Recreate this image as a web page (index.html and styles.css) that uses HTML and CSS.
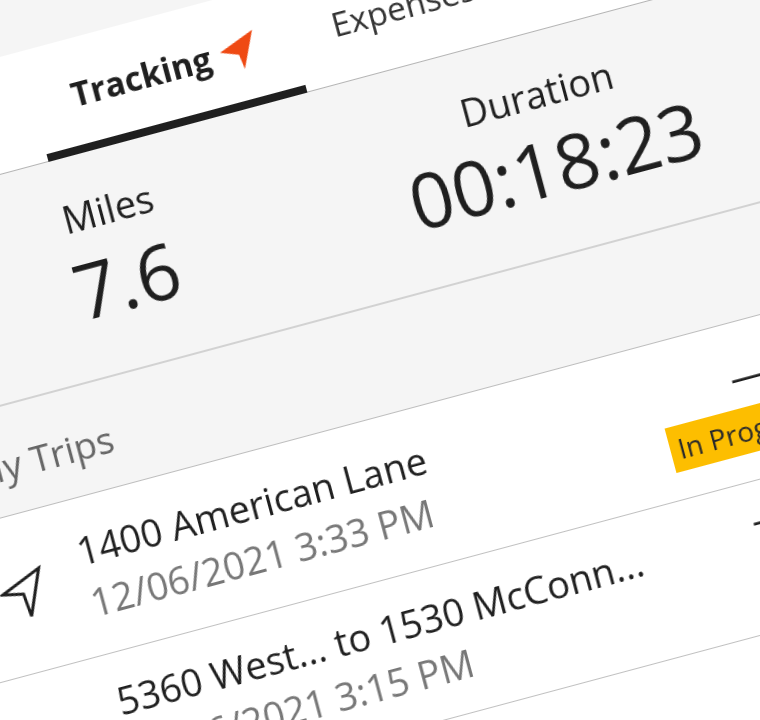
FILE: index.html
```html
<!DOCTYPE html>
<html lang="en">
<head>
<meta charset="utf-8">
<title>Tracking</title>
<link rel="stylesheet" href="styles.css">
</head>
<body>
<div class="viewport">
  <main class="screen">
    <div class="top-gap"></div>
    <nav class="tabs">
      <div class="tab tab-active">
        <span>Tracking</span>
        <svg class="tab-icon" viewBox="0 0 40 40"><polygon points="38.7,2 1.8,15.9 19.7,22.7 21.8,37.9"/></svg>
      </div>
      <div class="tab tab-plain">Expenses</div>
    </nav>
    <section class="stats">
      <div class="stat"><div class="stat-label">Miles</div><div class="stat-value">7.6</div></div>
      <div class="stat"><div class="stat-label">Duration</div><div class="stat-value">00:18:23</div></div>
    </section>
    <h2 class="trips-head">My Trips</h2>
    <div class="trip trip-first">
      <svg class="trip-icon" viewBox="0 0 50 50"><polygon points="44.3,3.7 2.5,20.5 23,25 25.1,48.3"/></svg>
      <div class="trip-text">
        <div class="trip-name">1400 American Lane</div>
        <div class="trip-date">12/06/2021 3:33 PM</div>
      </div>
      <div class="trip-side">
        <div class="trip-dash trip-dash-first">—</div>
        <div class="badge">In Progress</div>
      </div>
    </div>
    <div class="trip trip-second">
      <svg class="trip-icon trip-icon-low" viewBox="0 0 50 50"><polygon points="44.3,3.7 2.5,20.5 23,25 25.1,48.3"/></svg>
      <div class="trip-text">
        <div class="trip-name">5360 West... to 1530 McConn...</div>
        <div class="trip-date">12/06/2021 3:15 PM</div>
      </div>
      <div class="trip-side trip-side-second">
        <div class="trip-dash">—</div>
      </div>
    </div>
  </main>
</div>
</body>
</html>
```
FILE: styles.css
```css
* { box-sizing: border-box; }
html, body { margin: 0; padding: 0; background: #f5f5f5; }
.viewport { width: 760px; height: 720px; overflow: hidden; }
.screen {
  width: 1000px;
  height: 920px;
  margin-left: -200px;
  transform-origin: 200px 0;
  transform: rotate(-15deg);
  background: #fff;
  color: #1f1f1f;
  font-family: "Open Sans", "Liberation Sans", sans-serif;
  filter: blur(0.6px);
}
.top-gap { height: 55px; background: #f5f5f5; }
.tabs {
  display: flex;
  height: 114px;
  padding-left: 205px;
  background: #fff;
  border-bottom: 1px solid #b4b4b4;
}
.tab { height: 114px; padding-top: 33px; font-size: 33.5px; line-height: 45px; }
.tab-active {
  display: flex;
  justify-content: center;
  align-items: flex-start;
  gap: 8px;
  width: 268px;
  border-bottom: 8px solid #1f1f1f;
  font-weight: 700;
}
.tab-plain { padding-left: 41px; color: #333; }
.tab-icon { width: 40px; height: 40px; margin-top: 4px; margin-right: -3px; fill: #ef4a14; }
.stats {
  display: grid;
  grid-template-columns: 444px 444px;
  height: 224px;
  padding: 34px 0 0 28px;
  background: #f5f5f5;
  border-bottom: 2px solid #d2d2d2;
}
.stat { text-align: center; }
.stat-label { font-size: 38px; line-height: 52px; }
.stat-value { margin-top: 3px; font-size: 76px; line-height: 90px; }
.trips-head {
  height: 108px;
  margin: 0;
  padding: 32px 0 0 49px;
  background: #f5f5f5;
  border-bottom: 1px solid #bdbdbd;
  color: #666;
  font-size: 37px;
  font-weight: 400;
  line-height: 54px;
}
.trip { display: flex; align-items: center; padding-left: 46px; border-bottom: 1px solid #c0c0c0; background: #fff; }
.trip-first { height: 159px; }
.trip-second { height: 151px; }
.trip-icon { flex: none; width: 50px; height: 50px; margin-right: 36px; fill: none; stroke: #1f1f1f; stroke-width: 3; stroke-linejoin: miter; }
.trip-icon-low { margin-top: 12px; }
.trip-text { flex: none; width: 599px; }
.trip-name { font-size: 38px; line-height: 53px; color: #1f1f1f; white-space: nowrap; }
.trip-date { font-size: 38px; line-height: 53px; color: #777; white-space: nowrap; }
.trip-side { display: flex; flex-direction: column; align-items: flex-start; }
.trip-side-second { align-self: flex-start; margin-top: 12px; margin-left: 60px; }
.trip-dash { font-size: 36px; line-height: 54px; color: #1f1f1f; }
.trip-dash-first { margin-left: 76px; margin-bottom: 3px; }
.badge {
  height: 46px;
  padding: 0 8px;
  background: #fdbe00;
  color: #2a2a2a;
  font-size: 28px;
  line-height: 46px;
  white-space: nowrap;
}
```
